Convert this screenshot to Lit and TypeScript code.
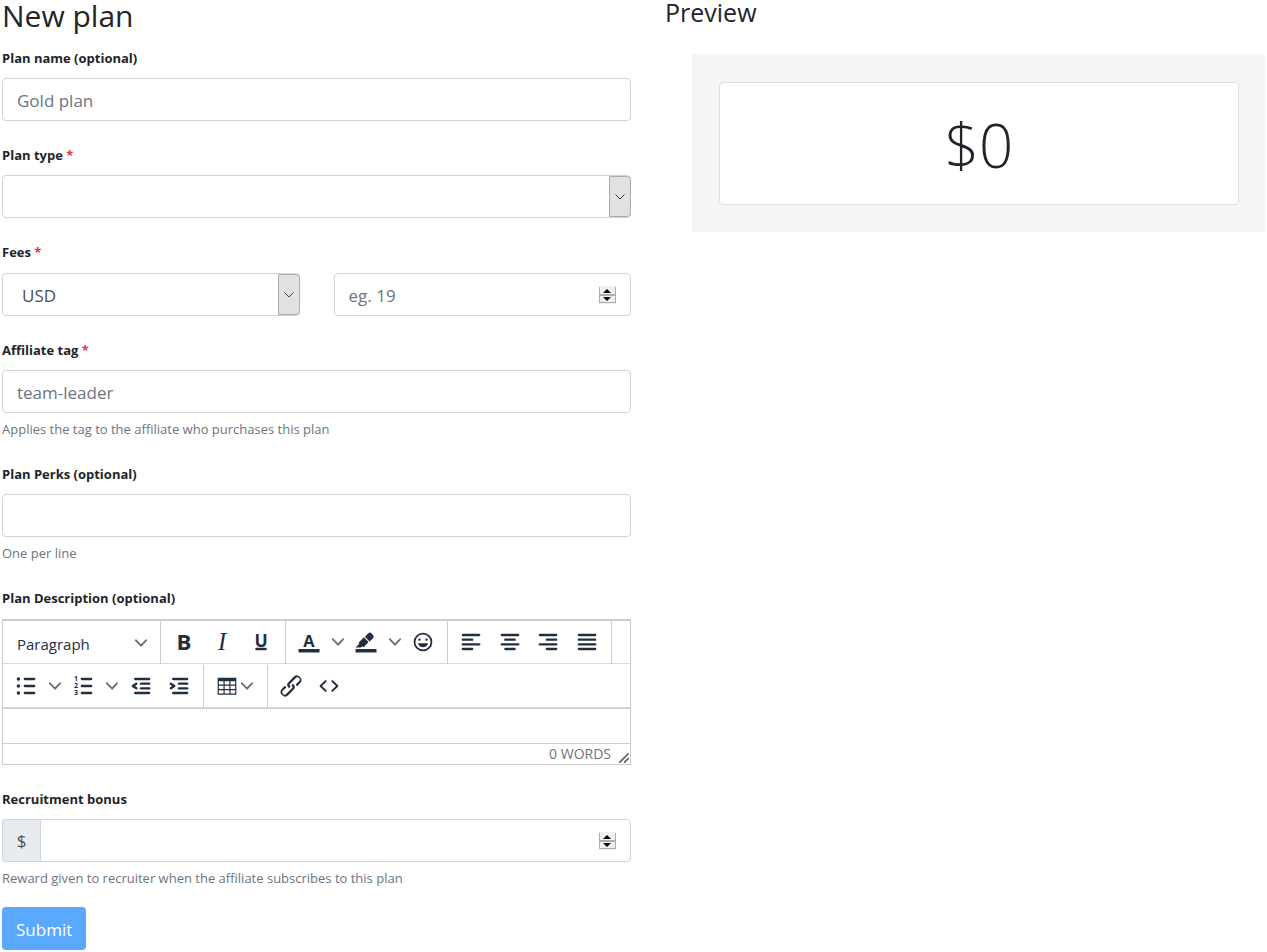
import { LitElement, html, css, svg, nothing, TemplateResult } from "lit";
import { customElement, property, state } from "lit/decorators.js";

const bar = (x: number, y: number, w: number) =>
  svg`<rect x=${x} y=${y} width=${w} height="2" rx="1"></rect>`;

const ICONS: Record<string, TemplateResult> = {
  bold: svg`<text class="letter" x="12" y="19" font-size="19" font-weight="700">B</text>`,
  italic: svg`<text class="letter serif" x="12" y="19" font-size="21">I</text>`,
  underline: svg`<text class="letter" x="12" y="16" font-size="15" font-weight="700">U</text>${bar(7, 17, 10)}`,
  color: svg`<text class="letter" x="12" y="16" font-size="14" font-weight="700">A</text><path d="M3 18h18v3H3z"></path>`,
  highlight: svg`<path d="M3 18h18v3H3z"></path><path d="M7.7 16.7H3l3.3-3.3-.7-.8L10.2 8l4 4.1-4 4.2c-.2.2-.6.2-.8 0l-.6-.7-1.1 1.1zm5-7.5L11 7.4l3-2.9a2 2 0 012.6 0L18 6c.7.7.7 2 0 2.7l-2.9 2.9-1.8-1.8-.5-.6"></path>`,
  emoji: svg`<path d="M9 11c.6 0 1-.4 1-1s-.4-1-1-1a1 1 0 00-1 1c0 .6.4 1 1 1zm6 0c.6 0 1-.4 1-1s-.4-1-1-1a1 1 0 00-1 1c0 .6.4 1 1 1zm-3 5.5c2.1 0 4-1.5 4.4-3.5H7.6c.5 2 2.3 3.5 4.4 3.5zM12 4a8 8 0 100 16 8 8 0 000-16zm0 14.5a6.5 6.5 0 110-13 6.5 6.5 0 010 13z"></path>`,
  left: svg`${bar(4, 5, 16)}${bar(4, 9, 10)}${bar(4, 13, 16)}${bar(4, 17, 10)}`,
  center: svg`${bar(4, 5, 16)}${bar(7, 9, 10)}${bar(4, 13, 16)}${bar(7, 17, 10)}`,
  right: svg`${bar(4, 5, 16)}${bar(10, 9, 10)}${bar(4, 13, 16)}${bar(10, 17, 10)}`,
  justify: svg`${bar(4, 5, 16)}${bar(4, 9, 16)}${bar(4, 13, 16)}${bar(4, 17, 16)}`,
  bullets: svg`${bar(10, 5, 10)}${bar(10, 11, 10)}${bar(10, 17, 10)}<circle cx="5.5" cy="6" r="1.5"></circle><circle cx="5.5" cy="12" r="1.5"></circle><circle cx="5.5" cy="18" r="1.5"></circle>`,
  numbers: svg`${bar(10, 5, 10)}${bar(10, 11, 10)}${bar(10, 17, 10)}<g class="letter" font-size="6" font-weight="700"><text x="6" y="8">1</text><text x="6" y="14">2</text><text x="6" y="20">3</text></g>`,
  outdent: svg`${bar(6, 5, 14)}${bar(11, 9, 9)}${bar(11, 13, 9)}${bar(6, 17, 14)}<path class="line" d="M8 10l-3 2 3 2"></path>`,
  indent: svg`${bar(6, 5, 14)}${bar(11, 9, 9)}${bar(11, 13, 9)}${bar(6, 17, 14)}<path class="line" d="M5 10l3 2-3 2"></path>`,
  table: svg`<path fill-rule="evenodd" d="M4 5h16v14.500H4zM5 8v2.800h4V8zM10 8v2.800h4V8zM15 8v2.800h4V8zM5 11.800v2.800h4v-2.800zM10 11.800v2.800h4v-2.800zM15 11.800v2.800h4v-2.800zM5 15.600v2.900h4v-2.900zM10 15.600v2.900h4v-2.900zM15 15.600v2.900h4v-2.900z"></path>`,
  link: svg`<path d="M6.2 12.3a1 1 0 011.4 1.4l-2.1 2a2 2 0 102.7 2.8l4.8-4.8a1 1 0 000-1.4 1 1 0 111.4-1.3 2.9 2.9 0 010 4L9.6 20a3.9 3.9 0 01-5.5-5.5l2-2zm11.6-.6a1 1 0 01-1.4-1.4l2-2a2 2 0 10-2.6-2.8L11 10.3a1 1 0 000 1.4A1 1 0 119.6 13a2.9 2.9 0 010-4L14.4 4a3.9 3.9 0 015.5 5.500l-2 2z"></path>`,
  code: svg`<path d="M9.800 15.700c.3.3.3.8 0 1-.3.4-.9.4-1.200 0l-4.400-4.100a.8.8 0 010-1.200l4.400-4.200c.3-.3.9-.3 1.200 0 .3.3.3.8 0 1.100L6 12l3.800 3.700zM14.200 15.700c-.3.3-.3.8 0 1 .4.4.9.4 1.200 0l4.400-4.100c.3-.3.3-.8 0-1.200l-4.400-4.200a.8.8 0 00-1.200 0c-.3.3-.3.8 0 1.100L18 12l-3.800 3.700z"></path>`,
};

const icon = (name: string) =>
  html`<svg class="icon" viewBox="0 0 24 24" aria-hidden="true">${ICONS[name]}</svg>`;

const chevron = html`<svg class="chevron" viewBox="0 0 10 10" aria-hidden="true">
  <path d="M8.7 2.2c.3-.3.8-.3 1 0 .4.4.4.9 0 1.2L5.7 7.8c-.3.3-.9.3-1.2 0L.2 3.4a.8.8 0 010-1.2c.3-.3.8-.3 1.1 0L5 6l3.7-3.8z"></path>
</svg>`;

const family = css`"Open Sans", "Noto Sans", sans-serif`;

@customElement("rich-editor")
export class RichEditor extends LitElement {
  @property() label = "";
  @state() private words = 0;

  static styles = css`
    :host { display: block; font-family: ${family}; color: #222f3e; }
    * { box-sizing: border-box; }
    .editor { border: 1px solid #ccc; background: #fff; }
    .row {
      display: flex; height: 44px;
      border-top: 1px solid transparent; border-bottom: 1px solid #d9d9d9;
    }
    .row:first-child { border-top-color: #ccc; }
    .group {
      display: flex; margin-bottom: -1px; padding: 0 5px 1px 4px;
      border-right: 1px solid #ccc;
    }
    .group.last { border-right: 0; }
    .format { width: 158px; padding: 0; display: grid; align-items: center; }
    .format select, .format .chevron { grid-area: 1 / 1; }
    .format .chevron { justify-self: end; margin-right: 13px; pointer-events: none; }
    .wide { width: 164px; }
    .style { width: 125px; }
    .lists { width: 201px; }
    select {
      appearance: none; width: 100%; height: 100%; padding: 2px 14px 0; border: 0;
      background: none; color: inherit; font: 15px/20px ${family};
    }
    button {
      display: flex; flex: 1 0 38px; align-items: center; justify-content: center;
      padding: 0; border: 0; background: none; color: inherit;
    }
    .arrow { flex: 0 0 19px; }
    .menu { flex: 0 0 54px; padding-right: 4px; }
    .icon { flex: none; width: 28px; height: 28px; fill: #222f3e; overflow: visible; }
    .chevron { flex: none; width: 12px; height: 12px; fill: #646d78; }
    .letter { text-anchor: middle; font-family: ${family}; }
    .serif { font-family: "Liberation Serif", serif; font-style: italic; }
    .line { fill: none; stroke: #222f3e; stroke-width: 2; stroke-linecap: round; stroke-linejoin: round; }
    textarea {
      display: block; width: 100%; height: 35px; padding: 6px 14px; border: 0;
      border-top: 1px solid #ccc; outline: 0; resize: none; background: none;
      font: 15px/20px ${family};
    }
    .status {
      display: flex; align-items: center; justify-content: flex-end; gap: 7px;
      height: 21px; border-top: 1px solid #ccc;
      color: #6c757d; font-size: 14px; line-height: 20px;
    }
    .grip { align-self: flex-end; width: 12px; height: 12px; fill: #5b6370; }
  `;

  private count(e: Event) {
    const text = (e.target as HTMLTextAreaElement).value.trim();
    this.words = text ? text.split(/\s+/).length : 0;
  }

  private tool(name: string, title: string) {
    return html`<button type="button" aria-label=${title}>${icon(name)}</button>`;
  }

  private arrow(title: string) {
    return html`<button type="button" class="arrow" aria-label=${title}>${chevron}</button>`;
  }

  render() {
    return html`<div class="editor">
      <div class="row">
        <div class="group format">
          <select aria-label="Block format"><option>Paragraph</option></select>${chevron}
        </div>
        <div class="group style">
          ${this.tool("bold", "Bold")}${this.tool("italic", "Italic")}${this.tool("underline", "Underline")}
        </div>
        <div class="group">
          ${this.tool("color", "Text color")}${this.arrow("Text colors")}
          ${this.tool("highlight", "Background color")}${this.arrow("Background colors")}
          ${this.tool("emoji", "Emoticons")}
        </div>
        <div class="group wide">
          ${this.tool("left", "Align left")}${this.tool("center", "Align center")}
          ${this.tool("right", "Align right")}${this.tool("justify", "Justify")}
        </div>
      </div>
      <div class="row">
        <div class="group lists">
          ${this.tool("bullets", "Bullet list")}${this.arrow("Bullet styles")}
          ${this.tool("numbers", "Numbered list")}${this.arrow("Number styles")}
          ${this.tool("outdent", "Decrease indent")}${this.tool("indent", "Increase indent")}
        </div>
        <div class="group">
          <button type="button" class="menu" aria-label="Table">${icon("table")}${chevron}</button>
        </div>
        <div class="group last">
          ${this.tool("link", "Insert link")}${this.tool("code", "Source code")}
        </div>
      </div>
      <textarea aria-label=${this.label} @input=${this.count}></textarea>
      <div class="status">
        <span>${this.words} WORDS</span>
        <svg class="grip" viewBox="0 0 10 10" aria-hidden="true">
          <path d="M8.1 1.1A.5.5 0 119 2l-7 7A.5.5 0 111 8l7-7zM8.1 5.1A.5.5 0 119 6l-3 3A.5.5 0 115 8l3-3z"></path>
        </svg>
      </div>
    </div>`;
  }
}

@customElement("app-root")
export class AppRoot extends LitElement {
  @state() private fee = "";

  static styles = css`
    :host { display: block; font-family: ${family}; color: #212529; background: #fff; }
    * { box-sizing: border-box; }
    .page { display: grid; grid-template-columns: 629fr 600fr; gap: 34px; padding: 0 2px 2px; }
    h1, h2 { margin: 0; font-weight: 400; }
    h1 { font-size: 30px; line-height: 32px; margin-bottom: 15px; }
    h2 { font-size: 25px; line-height: 24px; margin-bottom: 30px; }
    form { display: flex; flex-direction: column; }
    .field { display: block; margin: 0 0 23px; padding: 0; border: 0; min-width: 0; }
    .field.end { margin-bottom: 18px; }
    .label {
      display: block; margin-bottom: 9px; padding: 0;
      font-size: 13px; line-height: 22px; font-weight: 700;
    }
    legend.label, .label[for="description"] { margin-bottom: 10px; }
    .required { color: #dc3545; }
    .help { margin: 5px 0 0; font-size: 13px; line-height: 22px; color: #6c757d; }
    .pair { display: grid; grid-template-columns: 1fr 1fr; gap: 34px; }
    .control { display: grid; align-items: center; }
    .control > * { grid-area: 1 / 1; }
    .box {
      width: 100%; height: 43px; padding: 1px 14px 0; margin: 0;
      border: 1px solid #ced4da; border-radius: 4px; outline: 0;
      background: #fff; color: #495057; font: 17px/27px ${family};
    }
    .box::placeholder { color: #6c757d; opacity: 1; }
    select.box { appearance: none; padding-left: 19px; }
    input[type="number"] { appearance: textfield; }
    input::-webkit-inner-spin-button { appearance: none; margin: 0; }
    .drop {
      justify-self: end; display: grid; place-items: center; pointer-events: none;
      width: 22px; height: 41px; border: 1px solid #adadad; border-radius: 0 4px 4px 0;
      background: #e1e1e1;
    }
    .drop svg { width: 10px; height: 6px; fill: none; stroke: #444; }
    .spin { justify-self: end; margin-right: 15px; width: 17px; height: 18px; pointer-events: none; }
    .group { display: flex; }
    .group .control { flex: 1; }
    .group .box { border-radius: 0 4px 4px 0; }
    .prefix {
      width: 38px; padding: 2px 0 0; text-align: center; font-size: 17px; line-height: 38px;
      color: #495057; background: #e9ecef; border: 1px solid #ced4da; border-right: 0;
      border-radius: 4px 0 0 4px;
    }
    .submit {
      align-self: flex-start; height: 43px; padding: 2px 14px 0; border: 0; border-radius: 4px;
      background: #59a9ff; color: #fff; font: 17px/27px ${family};
    }
    .panel { margin-left: 27px; padding: 28px 26px 27px 27px; background: #f4f5f7; }
    .card {
      padding: 26px 0 23px; border: 1px solid #dfdfdf; border-radius: 4px; background: #fff;
      text-align: center; font-size: 60px; line-height: 72px; font-weight: 300;
    }
  `;

  private spin() {
    return html`<svg class="spin" viewBox="0 0 17 18" aria-hidden="true">
      <path fill="#f0f0f0" d="M0 0h17v18H0z"></path>
      <path fill="#adadad" d="M0 1h1v16H0zM16 1h1v16h-1zM0 8h17v2H0zM0 16h17v1H0z"></path>
      <path d="M4 7h8L8 3zM4 11h8l-4 4z"></path>
    </svg>`;
  }

  private drop() {
    return html`<span class="drop"><svg viewBox="0 0 10 6"><path d="M.5.5L5 5 9.500.5"></path></svg></span>`;
  }

  private label(id: string, text: string, required = false) {
    return html`<label class="label" for=${id}>${text}${required
      ? html` <span class="required">*</span>`
      : nothing}</label>`;
  }

  render() {
    return html`<main class="page">
      <form @submit=${(e: Event) => e.preventDefault()}>
        <h1>New plan</h1>
        <div class="field">
          ${this.label("name", "Plan name (optional)")}
          <input class="box" id="name" type="text" placeholder="Gold plan" />
        </div>
        <div class="field">
          ${this.label("type", "Plan type", true)}
          <div class="control">
            <select class="box" id="type"><option></option></select>${this.drop()}
          </div>
        </div>
        <fieldset class="field">
          <legend class="label">Fees <span class="required">*</span></legend>
          <div class="pair">
            <div class="control">
              <select class="box" aria-label="Currency"><option>USD</option></select>${this.drop()}
            </div>
            <div class="control">
              <input class="box" type="number" aria-label="Fee" placeholder="eg. 19"
                .value=${this.fee}
                @input=${(e: Event) => (this.fee = (e.target as HTMLInputElement).value)} />
              ${this.spin()}
            </div>
          </div>
        </fieldset>
        <div class="field">
          ${this.label("tag", "Affiliate tag", true)}
          <input class="box" id="tag" type="text" placeholder="team-leader" />
          <p class="help">Applies the tag to the affiliate who purchases this plan</p>
        </div>
        <div class="field">
          ${this.label("perks", "Plan Perks (optional)")}
          <input class="box" id="perks" type="text" />
          <p class="help">One per line</p>
        </div>
        <div class="field">
          ${this.label("description", "Plan Description (optional)")}
          <rich-editor id="description" label="Plan Description (optional)"></rich-editor>
        </div>
        <div class="field end">
          ${this.label("bonus", "Recruitment bonus")}
          <div class="group">
            <span class="prefix">$</span>
            <div class="control">
              <input class="box" id="bonus" type="number" />${this.spin()}
            </div>
          </div>
          <p class="help">Reward given to recruiter when the affiliate subscribes to this plan</p>
        </div>
        <button class="submit" type="submit">Submit</button>
      </form>
      <section>
        <h2>Preview</h2>
        <div class="panel"><div class="card">$${this.fee || 0}</div></div>
      </section>
    </main>`;
  }
}
